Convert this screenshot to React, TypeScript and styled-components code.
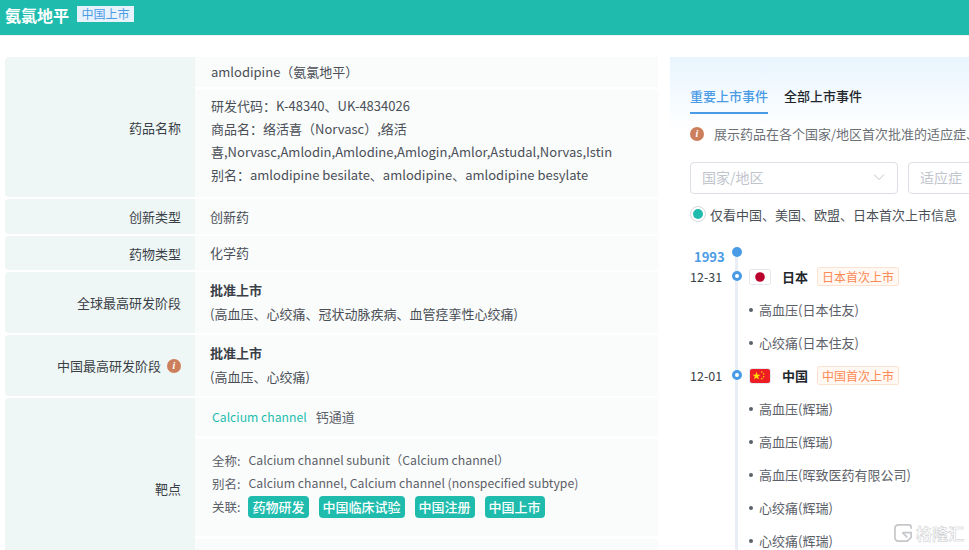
import React from 'react';
import styled, { createGlobalStyle } from 'styled-components';

const GlobalStyle = createGlobalStyle`
  html, body {
    margin: 0;
    padding: 0;
    height: 550px;
    overflow: hidden;
    background: #fff;
    font-family: "Noto Sans CJK SC", "Noto Sans", sans-serif;
    font-size: 13px;
    color: #4a4f57;
  }
`;

const Page = styled.div`
  position: relative;
  width: 969px;
  height: 550px;
  overflow: hidden;
`;

const Header = styled.header`
  height: 35px;
  box-sizing: border-box;
  background: #1fbcae;
  display: flex;
  align-items: center;
  padding: 0 0 5px 5px;
  gap: 8px;
  box-shadow: 0 1px 1px rgba(0, 0, 0, 0.06);
`;

const DrugTitle = styled.h1`
  margin: 0;
  font-size: 16px;
  line-height: 30px;
  font-weight: 700;
  color: #fff;
`;

const StatusBadge = styled.span`
  background: #e8f2fd;
  color: #4a9be6;
  font-size: 12px;
  line-height: 16px;
  padding: 0 4.5px;
  margin-top: -2px;
`;

const Content = styled.div`
  display: flex;
  align-items: flex-start;
  padding: 22px 0 0 5px;
  gap: 12px;
`;

const InfoTable = styled.div`
  width: 653px;
  flex: none;
  display: flex;
  flex-direction: column;
  gap: 2px;
`;

const Row = styled.div<{ $height: number }>`
  display: grid;
  grid-template-columns: 190px 1fr;
  height: ${(p) => p.$height}px;
`;

const Label = styled.div`
  background: #eff7f6;
  border-radius: 4px 0 0 4px;
  display: flex;
  align-items: center;
  justify-content: flex-end;
  gap: 6px;
  padding-right: 14px;
  color: #3a3f47;
`;

const InfoDot = styled.span`
  width: 14px;
  height: 14px;
  border-radius: 50%;
  background: #cd7f5c;
  color: #fff;
  font: italic 700 10px/14px "Liberation Serif", serif;
  text-align: center;
  flex: none;
`;

const Value = styled.div`
  background: #fafcfc;
  display: flex;
  flex-direction: column;
  justify-content: center;
  padding-left: 15px;
  line-height: 24px;
`;

const StageValue = styled(Value)`
  padding-bottom: 2px;
`;

const Stack = styled.div`
  display: flex;
  flex-direction: column;
  gap: 3px;
  height: 100%;
`;

const SubCell = styled.div<{ $height: number; $top?: number }>`
  height: ${(p) => p.$height}px;
  box-sizing: border-box;
  flex: none;
  background: #fafcfc;
  padding: ${(p) => p.$top ?? 0}px 0 0 16px;
  display: flex;
  flex-direction: column;
  justify-content: ${(p) => (p.$top === undefined ? 'center' : 'flex-start')};
`;

const NameLine = styled.div`
  margin-top: -2px;
`;

const TextLine = styled.div`
  line-height: 23px;
  white-space: nowrap;
`;

const StageName = styled.div`
  font-weight: 700;
  color: #3a3f47;
`;

const TargetTitle = styled.div`
  padding-left: 1px;
  margin-top: -2px;
  color: #5c6068;
`;

const TargetLink = styled.span`
  color: #1fbcae;
  font-size: 12.2px;
  margin-right: 9px;
`;

const TargetMeta = styled.div`
  font-size: 12.25px;
  line-height: 23px;
  white-space: nowrap;
  display: flex;
  align-items: center;
  gap: 8px;
  padding-left: 1px;
  color: #5c6068;
`;

const MetaKey = styled.span`
  font-size: 12.5px;
`;

const Chip = styled.span`
  background: #1fbcae;
  color: #fff;
  border-radius: 4px;
  line-height: 22px;
  padding: 0 4px;
  font-size: 13px;
  font-weight: 500;
  margin-right: 2px;
`;

const EventPanel = styled.aside`
  flex: 1;
  height: 528px;
  min-width: 0;
  padding: 23px 0 0 20px;
  background: linear-gradient(180deg, #e9f5fe 0, #fff 75px);
  overflow: hidden;
`;

const Tabs = styled.div`
  display: flex;
  gap: 16px;
  height: 34px;
`;

const Tab = styled.div<{ $active?: boolean }>`
  font-weight: 500;
  font-size: 13px;
  line-height: 32px;
  height: 34px;
  box-sizing: border-box;
  color: ${(p) => (p.$active ? '#4a9be6' : '#22262c')};
  border-bottom: 2px solid ${(p) => (p.$active ? '#4a9be6' : 'transparent')};
`;

const Notice = styled.div`
  display: flex;
  align-items: center;
  gap: 10px;
  margin-top: 10px;
  line-height: 20px;
  font-size: 13px;
  color: #6b6f76;
  white-space: nowrap;
`;

const Filters = styled.div`
  display: flex;
  gap: 10px;
  margin-top: 18px;
`;

const SelectBox = styled.div<{ $width: number }>`
  width: ${(p) => p.$width}px;
  flex: none;
  height: 32px;
  box-sizing: border-box;
  border: 1px solid #dcdfe6;
  border-radius: 4px;
  padding: 0 12px 2px 11px;
  display: flex;
  align-items: center;
  justify-content: space-between;
  color: #c0c4cc;
  font-size: 14px;
  background: #fff;
`;

const RadioRow = styled.label`
  display: flex;
  align-items: center;
  gap: 4px;
  margin-top: 11px;
  height: 18px;
  font-size: 13px;
  color: #4a4f57;
  white-space: nowrap;
`;

const RadioMark = styled.span`
  width: 16px;
  height: 16px;
  box-sizing: border-box;
  border: 1px solid #d5d8de;
  border-radius: 50%;
  display: flex;
  align-items: center;
  justify-content: center;
  &::after {
    content: '';
    width: 10px;
    height: 10px;
    border-radius: 50%;
    background: #1fbcae;
  }
`;

const Timeline = styled.div`
  position: relative;
  margin-top: 25px;
  &::before {
    content: '';
    position: absolute;
    left: 45px;
    top: 4px;
    bottom: -60px;
    width: 3px;
    background: #e9eef6;
  }
`;

const YearRow = styled.div`
  position: relative;
  height: 18px;
  line-height: 18px;
  margin-bottom: -6px;
  color: #4a9be6;
  font-weight: 700;
  font-size: 13px;
  padding-left: 4px;
  &::after {
    content: '';
    position: absolute;
    left: 42px;
    top: -1px;
    width: 10px;
    height: 10px;
    border-radius: 50%;
    background: #4a9be6;
  }
`;

const EventRow = styled.div`
  position: relative;
  display: flex;
  align-items: center;
  height: 33px;
`;

const EventDate = styled.span`
  width: 33px;
  font-size: 12.5px;
  color: #3a3f47;
  margin-right: 26px;
`;

const Node = styled.span`
  position: absolute;
  left: 42px;
  top: 11px;
  width: 10px;
  height: 10px;
  box-sizing: border-box;
  border: 3px solid #4a9be6;
  border-radius: 50%;
  background: #fff;
`;

const FlagBox = styled.span`
  width: 20px;
  height: 14px;
  flex: none;
  margin: 0 1px;
  border-radius: 2px;
  overflow: hidden;
  display: flex;
  box-shadow: 0 0 0 1px #e3e7ee;
`;

const Country = styled.strong`
  margin-left: 11px;
  font-size: 13px;
  color: #22262c;
  font-weight: 700;
`;

const FirstTag = styled.span`
  margin-left: 9px;
  height: 19px;
  box-sizing: border-box;
  padding: 0 4px;
  border: 1px solid #fde2d2;
  border-radius: 2px;
  background: #fff8f3;
  color: #fb8a55;
  font-size: 12px;
  line-height: 17px;
`;

const Indication = styled.div`
  display: flex;
  align-items: center;
  gap: 6px;
  height: 33px;
  margin-left: 59px;
  color: #5c6068;
  font-size: 13px;
  white-space: nowrap;
  &::before {
    content: '';
    width: 4px;
    height: 4px;
    border-radius: 50%;
    background: #5c6068;
  }
`;

const Watermark = styled.div`
  position: absolute;
  right: 5px;
  bottom: 7px;
  display: flex;
  align-items: center;
  gap: 3px;
  color: rgba(255, 255, 255, 0.85);
  font-size: 16px;
  font-weight: 700;
  line-height: 20px;
  -webkit-text-stroke: 0.5px #c9cbce;
`;

const JapanFlag = () => (
  <svg width="20" height="14" viewBox="0 0 20 14">
    <rect width="20" height="14" fill="#fff" />
    <circle cx="10" cy="7" r="4.800" fill="#bc002d" />
  </svg>
);

const ChinaFlag = () => (
  <svg width="20" height="14" viewBox="0 0 20 14">
    <rect width="20" height="14" fill="#ee1c25" />
    <polygon points="6.500,2.800 7.500,5.700 10.600,5.700 8.100,7.500 9,10.400 6.500,8.700 4,10.400 4.900,7.500 2.400,5.700 5.500,5.700" fill="#ffde00" />
    <circle cx="11.800" cy="3" r="0.800" fill="#ffde00" />
    <circle cx="13.600" cy="5" r="0.800" fill="#ffde00" />
    <circle cx="13.600" cy="7.800" r="0.800" fill="#ffde00" />
    <circle cx="11.800" cy="9.800" r="0.800" fill="#ffde00" />
  </svg>
);

const ChevronDown = () => (
  <svg width="12" height="12" viewBox="0 0 12 12" fill="none" stroke="#c0c4cc" strokeWidth="1">
    <path d="M1 3.500l5 5 5-5" />
  </svg>
);

const WatermarkLogo = () => (
  <svg width="19" height="20" viewBox="0 0 20 19" fill="none" stroke="#c4c6c9" strokeWidth="1.800">
    <path d="M18 5V3.500A2.500 2.500 0 0 0 15.500 1H4.500A3.500 3.500 0 0 0 1 4.500v10A3.500 3.500 0 0 0 4.500 18H14l4-4V9H9" />
    <path d="M9 9l5 5" />
  </svg>
);

const japanEvents = ['高血压(日本住友)', '心绞痛(日本住友)'];
const chinaEvents = ['高血压(辉瑞)', '高血压(辉瑞)', '高血压(晖致医药有限公司)', '心绞痛(辉瑞)', '心绞痛(辉瑞)'];
const chips = ['药物研发', '中国临床试验', '中国注册', '中国上市'];

export default function App() {
  return (
    <Page>
      <GlobalStyle />
      <Header>
        <DrugTitle>氨氯地平</DrugTitle>
        <StatusBadge>中国上市</StatusBadge>
      </Header>
      <Content>
        <InfoTable>
          <Row $height={140}>
            <Label>药品名称</Label>
            <Stack>
              <SubCell $height={30}>
                <NameLine>amlodipine（氨氯地平）</NameLine>
              </SubCell>
              <SubCell $height={107} $top={4}>
                <TextLine>研发代码：K-48340、UK-4834026</TextLine>
                <TextLine>商品名：络活喜（Norvasc）,络活</TextLine>
                <TextLine>喜,Norvasc,Amlodin,Amlodine,Amlogin,Amlor,Astudal,Norvas,Istin</TextLine>
                <TextLine>别名：amlodipine besilate、amlodipine、amlodipine besylate</TextLine>
              </SubCell>
            </Stack>
          </Row>
          <Row $height={35}>
            <Label>创新类型</Label>
            <Value>创新药</Value>
          </Row>
          <Row $height={34}>
            <Label>药物类型</Label>
            <Value>化学药</Value>
          </Row>
          <Row $height={61}>
            <Label>全球最高研发阶段</Label>
            <StageValue>
              <StageName>批准上市</StageName>
              <div>(高血压、心绞痛、冠状动脉疾病、血管痉挛性心绞痛)</div>
            </StageValue>
          </Row>
          <Row $height={61}>
            <Label>
              中国最高研发阶段
              <InfoDot>i</InfoDot>
            </Label>
            <StageValue>
              <StageName>批准上市</StageName>
              <div>(高血压、心绞痛)</div>
            </StageValue>
          </Row>
          <Row $height={180}>
            <Label>靶点</Label>
            <Stack>
              <SubCell $height={38}>
                <TargetTitle>
                  <TargetLink>Calcium channel</TargetLink>钙通道
                </TargetTitle>
              </SubCell>
              <SubCell $height={97} $top={10}>
                <TargetMeta>
                  <MetaKey>全称:</MetaKey>Calcium channel subunit（Calcium channel）
                </TargetMeta>
                <TargetMeta>
                  <MetaKey>别名:</MetaKey>Calcium channel, Calcium channel (nonspecified subtype)
                </TargetMeta>
                <TargetMeta>
                  <MetaKey>关联:</MetaKey>
                  {chips.map((chip) => (
                    <Chip key={chip}>{chip}</Chip>
                  ))}
                </TargetMeta>
              </SubCell>
              <SubCell $height={39} />
            </Stack>
          </Row>
        </InfoTable>
        <EventPanel>
          <Tabs>
            <Tab $active>重要上市事件</Tab>
            <Tab>全部上市事件</Tab>
          </Tabs>
          <Notice>
            <InfoDot>i</InfoDot>
            展示药品在各个国家/地区首次批准的适应症、
          </Notice>
          <Filters>
            <SelectBox $width={208}>
              国家/地区
              <ChevronDown />
            </SelectBox>
            <SelectBox $width={208}>适应症</SelectBox>
          </Filters>
          <RadioRow>
            <RadioMark />
            仅看中国、美国、欧盟、日本首次上市信息
          </RadioRow>
          <Timeline>
            <YearRow>1993</YearRow>
            <EventRow>
              <EventDate>12-31</EventDate>
              <Node />
              <FlagBox>
                <JapanFlag />
              </FlagBox>
              <Country>日本</Country>
              <FirstTag>日本首次上市</FirstTag>
            </EventRow>
            {japanEvents.map((name) => (
              <Indication key={name}>{name}</Indication>
            ))}
            <EventRow>
              <EventDate>12-01</EventDate>
              <Node />
              <FlagBox>
                <ChinaFlag />
              </FlagBox>
              <Country>中国</Country>
              <FirstTag>中国首次上市</FirstTag>
            </EventRow>
            {chinaEvents.map((name, i) => (
              <Indication key={i}>{name}</Indication>
            ))}
          </Timeline>
        </EventPanel>
      </Content>
      <Watermark>
        <WatermarkLogo />
        格隆汇
      </Watermark>
    </Page>
  );
}
